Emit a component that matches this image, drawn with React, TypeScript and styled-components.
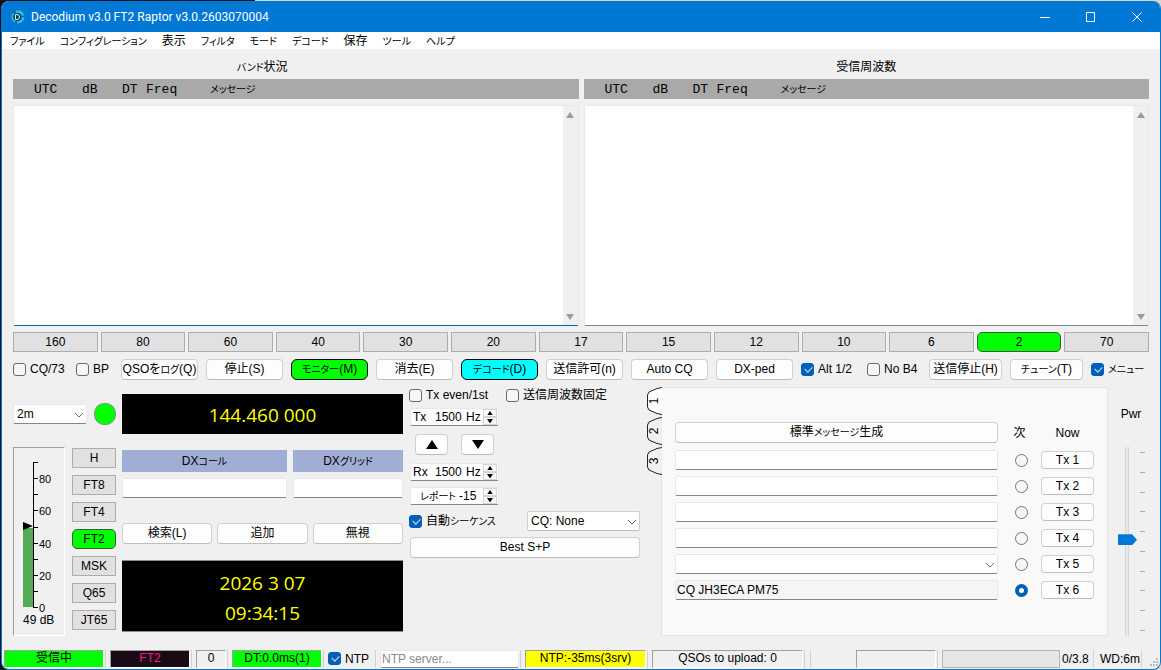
import React from 'react';
import styled, { createGlobalStyle, css } from 'styled-components';

const Global = createGlobalStyle`
  * { box-sizing: border-box; }
  html { background: linear-gradient(to right, #10131c 255px, #d6d6d6 255px); }
  body { margin: 0; }
  body, button, input, select, textarea {
    font-family: "Liberation Sans", "Noto Sans CJK JP", sans-serif;
    font-size: 12px;
    line-height: 16px;
    font-feature-settings: "palt";
    color: #000;
  }
  button, input, select, textarea { margin: 0; padding: 0; outline: none; }
`;

/* ---------- text ---------- */

const Kana = styled.span`
  font-size: 10px;
  line-height: 1;
  font-feature-settings: "palt";
`;

/* Katakana runs are set smaller than the kanji and Latin text beside them. */
function Text({ children }: { children: string }) {
  return (
    <>
      {children.split(/([\u30a0-\u30ff]+)/).map((part, i) =>
        i % 2 ? <Kana key={i}>{part}</Kana> : part,
      )}
    </>
  );
}

/* ---------- window frame ---------- */

const Window = styled.div`
  display: flex;
  flex-direction: column;
  min-height: calc(100vh - 1px);
  margin: 1px 0 0 1px;
  border: 1px solid #0078d4;
  border-top: 0;
  border-radius: 8px;
  overflow: hidden;
  background: #f0f0f0;
`;

const TitleBar = styled.header`
  display: flex;
  align-items: center;
  height: 31px;
  flex: none;
  padding-left: 9px;
  background: #0078d4;
`;

const TitleText = styled.h1`
  flex: 1;
  margin: 0 0 0 6px;
  color: #fff;
  font: 400 12px/16px Roboto, sans-serif;
`;

const CaptionButton = styled.button`
  display: flex;
  align-items: center;
  justify-content: center;
  width: 46px;
  height: 31px;
  border: 0;
  background: none;
`;

const MenuBar = styled.nav`
  display: flex;
  flex: none;
  gap: 15px;
  height: 17px;
  padding-left: 8px;
  background: #fff;
`;

const MenuItem = styled.button`
  border: 0;
  background: none;
  white-space: nowrap;
`;

const Main = styled.main`
  display: flex;
  flex: 1;
  flex-direction: column;
  gap: 6px;
  padding: 0 11px 13px 11px;
`;

/* ---------- decode panes ---------- */

const Panes = styled.div`
  display: flex;
  flex: 1;
  gap: 5px;
`;

const Pane = styled.section`
  display: flex;
  flex: 1;
  flex-direction: column;
  min-width: 0;
`;

const PaneTitle = styled.h2`
  margin: 0;
  padding: 8px 67px 2px 0;
  font-size: 12px;
  line-height: 20px;
  font-weight: 400;
  text-align: center;
`;

const WidePaneTitle = styled(PaneTitle)`
  padding-right: 0;
`;

const PaneHeader = styled.div`
  display: grid;
  grid-template-columns: 48px 40px 24px 64px 1fr;
  height: 20px;
  margin-bottom: 6px;
  padding-left: 21px;
  background: #a9a9a9;
  font: 13px/21px "Liberation Mono", "Noto Sans CJK JP", monospace;
`;

const PaneBody = styled.div<{ $active?: boolean }>`
  display: flex;
  flex: 1;
  min-height: 160px;
  border: 1px solid #e6e8ea;
  border-bottom-color: ${(p) => (p.$active ? '#0067c0' : '#868686')};
  border-radius: 2px;
  background: #fff;
`;

const Decodes = styled.textarea`
  flex: 1;
  min-width: 0;
  border: 0;
  background: #fff;
  resize: none;
  overflow: hidden;
`;

const ScrollBar = styled.div`
  display: flex;
  flex-direction: column;
  align-items: center;
  justify-content: space-between;
  width: 15px;
  padding: 6px 0 5px;
  background: #f0f0f0;
`;

/* ---------- buttons ---------- */

const BandGrid = styled.div`
  display: grid;
  grid-template-columns: repeat(13, 1fr);
  gap: 3px;
`;

const FlatButton = styled.button<{ $on?: boolean }>`
  height: 20px;
  border: 1px solid #adadad;
  background: #e1e1e1;
  line-height: 18px;
  ${(p) =>
    p.$on &&
    css`
      border-color: #3c5a3c;
      border-radius: 5px;
      background: #00ff00;
    `}
`;

const PushButton = styled.button<{ $fill?: string }>`
  flex: 1;
  min-width: 0;
  height: 21px;
  border: 1px solid #d0d0d0;
  border-bottom-color: #bdbdbd;
  border-radius: 4px;
  background: #fdfdfd;
  line-height: 19px;
  white-space: nowrap;
  ${(p) =>
    p.$fill &&
    css`
      border-color: #000;
      border-radius: 6px;
      background: ${p.$fill};
    `}
`;

const SmallPush = styled(PushButton)`
  height: 18px;
  line-height: 16px;
`;

const TuneButton = styled(PushButton)`
  flex: none;
  width: 73px;
`;

const ArrowButton = styled(PushButton)`
  display: flex;
  flex: none;
  align-items: center;
  justify-content: center;
  width: 33px;
`;

const ActionRow = styled.div`
  display: flex;
  align-items: center;
  gap: 8px;
  height: 22px;
`;

/* ---------- tick boxes ---------- */

const CheckLabel = styled.label<{ $width?: number }>`
  display: flex;
  flex: none;
  align-items: center;
  gap: 4px;
  width: ${(p) => (p.$width ? `${p.$width}px` : 'auto')};
  white-space: nowrap;
`;

const Box = styled.input`
  appearance: none;
  position: relative;
  flex: none;
  width: 13px;
  height: 13px;
  border: 1px solid #6a6a6a;
  border-radius: 3px;
  background: #f6f6f6;
  &:checked {
    border-color: #005fb8;
    background: #005fb8;
  }
  &:checked::after {
    content: "";
    position: absolute;
    left: 3px;
    top: 2px;
    width: 6px;
    height: 4px;
    border: solid #cfe0f2;
    border-width: 0 0 1px 1px;
    transform: rotate(-45deg);
  }
`;

function Check({ children, width, on }: { children: string; width?: number; on?: boolean }) {
  return (
    <CheckLabel $width={width}>
      <Box type="checkbox" defaultChecked={on} />
      <span><Text>{children}</Text></span>
    </CheckLabel>
  );
}

/* ---------- fields ---------- */

const fieldLook = css`
  border: 1px solid #e8e8e8;
  border-bottom-color: #868686;
  border-radius: 2px;
  background: #fff;
`;

const Field = styled.input`
  ${fieldLook}
  width: 100%;
  min-width: 0;
  height: 20px;
  padding: 0 1px;
  &:read-only { background: #f5f5f5; }
  &::placeholder { color: #8a8a8a; opacity: 1; }
`;

const Combo = styled.span<{ $width?: number }>`
  position: relative;
  display: flex;
  flex: none;
  width: ${(p) => (p.$width ? `${p.$width}px` : '100%')};
`;

const ComboSelect = styled.select<{ $framed?: boolean }>`
  ${fieldLook}
  appearance: none;
  width: 100%;
  height: 20px;
  padding: 0 18px 0 3px;
  ${(p) => p.$framed && css`border-color: #cfcfcf; border-bottom-color: #bdbdbd;`}
`;

const Chevron = styled.svg`
  position: absolute;
  right: 3px;
  top: calc(50% - 2px);
  pointer-events: none;
`;

function Select({ label, options, width, framed }: { label: string; options: string[]; width?: number; framed?: boolean }) {
  return (
    <Combo $width={width}>
      <ComboSelect aria-label={label} $framed={framed}>
        {options.map((o) => (
          <option key={o}>{o}</option>
        ))}
      </ComboSelect>
      <Chevron width="10" height="6" viewBox="0 0 10 6">
        <path d="M1 1l4 4 4-4" fill="none" stroke="#6b6b6b" />
      </Chevron>
    </Combo>
  );
}

const Spin = styled.label`
  ${fieldLook}
  display: flex;
  align-items: center;
  width: 89px;
  height: 18px;
  margin-left: 1px;
  padding-left: 2px;
`;

const SpinPrefix = styled.span<{ $wide?: boolean }>`
  flex: none;
  width: ${(p) => (p.$wide ? 46 : 22)}px;
  padding-left: ${(p) => (p.$wide ? 7 : 0)}px;
  white-space: nowrap;
`;

const SpinValue = styled.input`
  flex: 1;
  min-width: 0;
  height: 14px;
  border: 0;
  background: none;
`;

const SpinSuffix = styled.span`
  width: 17px;
`;

const SpinButtons = styled.span`
  display: flex;
  flex: none;
  flex-direction: column;
  width: 14px;
  margin-right: 1px;
`;

const SpinButton = styled.button`
  display: flex;
  align-items: center;
  justify-content: center;
  height: 8px;
  border: 1px solid #d4d4d4;
  background: #f8f8f8;
`;

function Triangle({ size, down, color = '#000' }: { size: number; down?: boolean; color?: string }) {
  return (
    <svg width={size} height={size * 0.75} viewBox="0 0 8 6" aria-hidden="true">
      <path d={down ? 'M0 0h8L4 6z' : 'M0 6h8L4 0z'} fill={color} />
    </svg>
  );
}

function Spinner({ prefix, value, suffix, wide }: { prefix: string; value: string; suffix?: string; wide?: boolean }) {
  return (
    <Spin>
      <SpinPrefix $wide={wide}><Text>{prefix}</Text></SpinPrefix>
      <SpinValue defaultValue={value} />
      {suffix && <SpinSuffix>{suffix}</SpinSuffix>}
      <SpinButtons>
        <SpinButton aria-label={`${prefix} +`}><Triangle size={6} /></SpinButton>
        <SpinButton aria-label={`${prefix} -`}><Triangle size={6} down /></SpinButton>
      </SpinButtons>
    </Spin>
  );
}

/* ---------- lower section ---------- */

const Lower = styled.div`
  display: flex;
  height: 250px;
  flex: none;
  padding-top: 1px;
`;

const Station = styled.section`
  display: flex;
  flex: none;
  flex-direction: column;
  gap: 13px;
  width: 390px;
  padding-top: 7px;
`;

const DialRow = styled.div`
  display: flex;
  align-items: center;
`;

const Lamp = styled.button`
  width: 22px;
  height: 22px;
  margin: 0 6px 0 7px;
  border: 1px solid #8f8f8f;
  border-radius: 10px;
  background: #00ff00;
`;

const Display = styled.div`
  flex: 1;
  height: 40px;
  background: #000;
  color: #ffff00;
  font: 19px/43px "Open Sans", sans-serif;
  text-align: center;
`;

const Clock = styled(Display)`
  flex: none;
  height: 72px;
  padding-top: 7px;
  border: 1px solid #8a8a8a;
  border-width: 1px 0;
  line-height: 30px;
`;

const StationRow = styled.div`
  display: flex;
  height: 189px;
`;

const Meter = styled.div`
  width: 52px;
  border: 1px solid #a0a0a0;
  border-right-color: #fff;
  border-bottom-color: #fff;
`;

const Modes = styled.div`
  display: flex;
  flex-direction: column;
  gap: 7px;
  width: 44px;
  margin: 1px 6px 0 7px;
`;

const Contact = styled.div`
  flex: 1;
  padding-top: 3px;
`;

const DxGrid = styled.div`
  display: grid;
  grid-template-columns: 3fr 2fr;
  gap: 6px;
  margin-bottom: 25px;
`;

const DxLabel = styled.label`
  height: 22px;
  background: #a0aed6;
  line-height: 22px;
  text-align: center;
`;

const ButtonRow = styled.div`
  display: flex;
  gap: 5px;
  margin-bottom: 16px;
`;

const Tuning = styled.section`
  display: flex;
  flex: none;
  flex-direction: column;
  gap: 6px;
  width: 232px;
  margin: 0 5px 0 6px;
  padding: 1px 1px 0 0;
`;

const TuningRow = styled.div`
  display: flex;
  align-items: center;
  justify-content: space-between;
  height: 20px;
`;

const SlotRow = styled(TuningRow)`
  justify-content: flex-start;
  gap: 18px;
  height: 14px;
`;

const ArrowRow = styled(TuningRow)`
  justify-content: flex-start;
  gap: 13px;
  height: 25px;
  padding-left: 6px;
`;

const BestRow = styled.div`
  display: flex;
  margin-left: 1px;
`;

/* ---------- message tabs ---------- */

const Messages = styled.section`
  display: flex;
  flex: 1;
  min-width: 0;
`;

const Tabs = styled.div`
  display: flex;
  flex-direction: column;
  gap: 2px;
  width: 15px;
`;

const Tab = styled.button`
  position: relative;
  width: 16px;
  height: 28px;
  border: 0;
  background: none;
`;

const TabShape = styled.svg`
  position: absolute;
  inset: 0;
`;

const TabText = styled.span`
  position: relative;
  display: block;
  transform: rotate(-90deg);
`;

const TabPage = styled.div`
  flex: 1;
  min-width: 0;
  padding: 34px 13px 0;
  border: 1px solid #e3e3e3;
  background: #f9f9f9;
`;

const MessageRow = styled.div`
  display: grid;
  grid-template-columns: 1fr 43px 53px;
  align-items: center;
  justify-items: center;
  height: 26px;
`;

const GenerateRow = styled(MessageRow)`
  height: 21px;
  margin-bottom: 4px;
`;

const WideButton = styled(PushButton)`
  width: 100%;
`;

const TxButton = styled(SmallPush)`
  width: 100%;
`;

const Radio = styled.input`
  appearance: none;
  width: 13px;
  height: 13px;
  margin-left: 3px;
  border: 1px solid #767676;
  border-radius: 50%;
  background: #f6f6f6;
  &:checked {
    border: 4px solid #005fb8;
    background: #fff;
  }
`;

const Power = styled.section`
  display: flex;
  flex-direction: column;
  gap: 25px;
  align-items: flex-end;
  width: 41px;
  padding: 19px 4px 0 0;
`;

const PowerLabel = styled.label`
  width: 28px;
  text-align: center;
`;

const PowerBody = styled.div`
  display: flex;
  gap: 3px;
`;

const PowerSlider = styled.input`
  appearance: none;
  writing-mode: vertical-lr;
  direction: rtl;
  width: 19px;
  height: 189px;
  background: linear-gradient(to right, transparent 7px, #d2d6d8 7px, #d2d6d8 8px, #e7eaea 8px, #e7eaea 10px, #d2d6d8 10px, #d2d6d8 11px, transparent 11px);
  &::-webkit-slider-thumb {
    appearance: none;
    width: 19px;
    height: 11px;
    background: #0078d7;
    clip-path: polygon(0 0, 14px 0, 100% 50%, 14px 100%, 0 100%);
  }
`;

const PowerTicks = styled.div`
  display: flex;
  flex-direction: column;
  justify-content: space-between;
  height: 179px;
  margin-top: 5px;
`;

const PowerTick = styled.i`
  width: 5px;
  height: 1px;
  background: #b0a999;
`;

/* ---------- status bar ---------- */

const StatusBar = styled.footer`
  display: flex;
  flex: none;
  align-items: center;
  height: 20px;
  padding: 0 0 1px 2px;
`;

const Cell = styled.div<{ $w: number; $bg?: string; $fg?: string }>`
  flex: none;
  width: ${(p) => p.$w}px;
  height: 18px;
  border: 1px solid #a0a0a0;
  border-right-color: #fff;
  border-bottom-color: #fff;
  background: ${(p) => p.$bg || 'transparent'};
  color: ${(p) => p.$fg || '#000'};
  line-height: 14px;
  text-align: center;
  white-space: nowrap;
`;

const Divider = styled.i`
  flex: none;
  width: 1px;
  height: 18px;
  margin: 0 4px 0 1px;
  background: #d2d2d2;
`;

const NtpCheck = styled.div`
  width: 46px;
`;

const NtpField = styled(Field)`
  flex: none;
  width: 139px;
  height: 18px;
`;

const Stretch = styled.div`
  flex: 1;
`;

const Progress = styled.div`
  width: 118px;
  height: 18px;
  border: 1px solid #b4b4b4;
  background: #e6e6e6;
`;

const StatusText = styled.span<{ $w: number }>`
  width: ${(p) => p.$w}px;
  margin-left: 2px;
  white-space: nowrap;
`;

const Grip = styled.svg`
  align-self: flex-end;
  margin-left: 4px;
`;

const menus = ['ファイル', 'コンフィグレーション', '表示', 'フィルタ', 'モード', 'デコード', '保存', 'ツール', 'ヘルプ'];
const bands = ['160', '80', '60', '40', '30', '20', '17', '15', '12', '10', '6', '2', '70'];
const modes = ['H', 'FT8', 'FT4', 'FT2', 'MSK', 'Q65', 'JT65'];
const actions: [string, string?][] = [
  ['QSOをログ(Q)'],
  ['停止(S)'],
  ['モニター(M)', '#00ff00'],
  ['消去(E)'],
  ['デコード(D)', '#00ffff'],
  ['送信許可(n)'],
  ['Auto CQ'],
  ['DX-ped'],
];

function Headings() {
  return (
    <PaneHeader>
      <span>UTC</span>
      <span>dB</span>
      <span>DT</span>
      <span>Freq</span>
      <span><Text>メッセージ</Text></span>
    </PaneHeader>
  );
}

function DecodeArea({ label, active }: { label: string; active?: boolean }) {
  return (
    <PaneBody $active={active}>
      <Decodes aria-label={label} readOnly />
      <ScrollBar>
        <Triangle size={8} color="#9b9b9b" />
        <Triangle size={8} color="#9b9b9b" down />
      </ScrollBar>
    </PaneBody>
  );
}

function LevelMeter() {
  const ticks = Array.from({ length: 10 }, (_, i) => i);
  return (
    <Meter>
      <svg width="50" height="187" viewBox="0 0 50 187">
        <rect x="9" y="80" width="10" height="79" fill="#55aa55" />
        <path d="M9 74l10 4-10 4z" />
        <path d="M19.500 14v146" stroke="#000" />
        {ticks.map((i) => (
          <path key={i} d={`M20 ${Math.round(159 - i * 16.1) + 0.5}h4`} stroke="#000" />
        ))}
        {[0, 20, 40, 60, 80].map((v) => (
          <text key={v} x="25" y={164 - v * 1.61} fontSize="11">{v}</text>
        ))}
        <text x="9" y="176" fontSize="12">49 dB</text>
      </svg>
    </Meter>
  );
}

export default function App() {
  return (
    <>
      <Global />
      <Window>
        <TitleBar>
          <svg width="14" height="14" viewBox="0 0 14 14" aria-hidden="true">
            <circle cx="7" cy="7" r="6.500" fill="#0a6a94" />
            <circle cx="7" cy="7" r="5.300" fill="none" stroke="#1fc4e8" strokeWidth="2.400" strokeDasharray="9 2" />
            <circle cx="6" cy="7" r="3.800" fill="#123a5c" />
            <path d="M4.500 4.500h1.500a2.500 2.500 0 0 1 0 5h-1.500z" fill="none" stroke="#d6f3ff" />
          </svg>
          <TitleText>Decodium v3.0 FT2 Raptor v3.0.2603070004</TitleText>
          <CaptionButton aria-label="最小化">
            <svg width="10" height="10"><path d="M0 5.500h10" stroke="#fff" /></svg>
          </CaptionButton>
          <CaptionButton aria-label="最大化">
            <svg width="10" height="10"><path d="M.5.5h8v9h-8z" fill="none" stroke="#fff" /></svg>
          </CaptionButton>
          <CaptionButton aria-label="閉じる">
            <svg width="10" height="10"><path d="M.5.5l9 9M9.500.5l-9 9" stroke="#fff" /></svg>
          </CaptionButton>
        </TitleBar>
        <MenuBar>
          {menus.map((m) => (
            <MenuItem key={m}><Text>{m}</Text></MenuItem>
          ))}
        </MenuBar>

        <Main>
          <Panes>
            <Pane>
              <PaneTitle><Text>バンド状況</Text></PaneTitle>
              <Headings />
              <DecodeArea label="バンド状況" active />
            </Pane>
            <Pane>
              <WidePaneTitle>受信周波数</WidePaneTitle>
              <Headings />
              <DecodeArea label="受信周波数" />
            </Pane>
          </Panes>

          <BandGrid>
            {bands.map((b) => (
              <FlatButton key={b} $on={b === '2'}>{b}</FlatButton>
            ))}
          </BandGrid>

          <ActionRow>
            <Check width={55}>CQ/73</Check>
            <Check width={37}>BP</Check>
            {actions.map(([text, fill]) => (
              <PushButton key={text} $fill={fill}><Text>{text}</Text></PushButton>
            ))}
            <Check width={58} on>Alt 1/2</Check>
            <Check width={54}>No B4</Check>
            <TuneButton>送信停止(H)</TuneButton>
            <TuneButton><Text>チューン(T)</Text></TuneButton>
            <Check width={58} on>メニュー</Check>
          </ActionRow>

          <Lower>
            <Station>
              <DialRow>
                <Select label="バンド" options={['2m']} width={74} />
                <Lamp aria-label="CAT" />
                <Display>144.460 000</Display>
              </DialRow>
              <StationRow>
                <LevelMeter />
                <Modes>
                  {modes.map((m) => (
                    <FlatButton key={m} $on={m === 'FT2'}>{m}</FlatButton>
                  ))}
                </Modes>
                <Contact>
                  <DxGrid>
                    <DxLabel htmlFor="dx-call"><Text>DXコール</Text></DxLabel>
                    <DxLabel htmlFor="dx-grid"><Text>DXグリッド</Text></DxLabel>
                    <Field id="dx-call" />
                    <Field id="dx-grid" />
                  </DxGrid>
                  <ButtonRow>
                    <PushButton>検索(L)</PushButton>
                    <PushButton>追加</PushButton>
                    <PushButton>無視</PushButton>
                  </ButtonRow>
                  <Clock>
                    <div>2026 3 07</div>
                    <div>09:34:15</div>
                  </Clock>
                </Contact>
              </StationRow>
            </Station>

            <Tuning>
              <SlotRow>
                <Check>Tx even/1st</Check>
                <Check>送信周波数固定</Check>
              </SlotRow>
              <Spinner prefix="Tx" value="1500" suffix="Hz" />
              <ArrowRow>
                <ArrowButton aria-label="Tx ← Rx"><Triangle size={12} /></ArrowButton>
                <ArrowButton aria-label="Rx ← Tx"><Triangle size={12} down /></ArrowButton>
              </ArrowRow>
              <Spinner prefix="Rx" value="1500" suffix="Hz" />
              <Spinner prefix="レポート" value="-15" wide />
              <TuningRow>
                <Check on>自動シーケンス</Check>
                <Select label="CQ" options={['CQ: None']} width={113} framed />
              </TuningRow>
              <BestRow>
                <PushButton>Best S+P</PushButton>
              </BestRow>
            </Tuning>

            <Messages>
              <Tabs role="tablist">
                {['1', '2', '3'].map((t, i) => (
                  <Tab key={t} role="tab" aria-selected={i === 0}>
                    <TabShape width="16" height="28" viewBox="0 0 16 28">
                      <path
                        d="M16 .5L11 1.500 3 5 1.500 8v12L3 23l8 3.500 5 1"
                        fill={i === 0 ? '#fdfdfd' : '#f0f0f0'}
                        stroke="#222"
                      />
                    </TabShape>
                    <TabText>{t}</TabText>
                  </Tab>
                ))}
              </Tabs>
              <TabPage role="tabpanel">
                <GenerateRow>
                  <WideButton><Text>標準メッセージ生成</Text></WideButton>
                  <span>次</span>
                  <span>Now</span>
                </GenerateRow>
                {[1, 2, 3, 4, 5, 6].map((n) => (
                  <MessageRow key={n}>
                    {n === 5 ? (
                      <Select label="Tx 5" options={['']} />
                    ) : (
                      <Field aria-label={`Tx ${n}`} readOnly={n === 6} defaultValue={n === 6 ? 'CQ JH3ECA PM75' : ''} />
                    )}
                    <Radio type="radio" name="next" aria-label={`次 Tx ${n}`} defaultChecked={n === 6} />
                    <TxButton>Tx {n}</TxButton>
                  </MessageRow>
                ))}
              </TabPage>
            </Messages>

            <Power>
              <PowerLabel htmlFor="power">Pwr</PowerLabel>
              <PowerBody>
                <PowerSlider id="power" type="range" min={0} max={100} defaultValue={51} />
                <PowerTicks>
                  {Array.from({ length: 10 }, (_, i) => (
                    <PowerTick key={i} />
                  ))}
                </PowerTicks>
              </PowerBody>
            </Power>
          </Lower>
        </Main>

        <StatusBar>
          <Cell $w={100} $bg="#00ff00">受信中</Cell>
          <Divider />
          <Cell $w={80} $bg="#1a0a14" $fg="#ff1493">FT2</Cell>
          <Divider />
          <Cell $w={30}>0</Cell>
          <Divider />
          <Cell $w={90} $bg="#00ff00">DT:0.0ms(1)</Cell>
          <Divider />
          <NtpCheck><Check on>NTP</Check></NtpCheck>
          <Divider />
          <NtpField aria-label="NTP server" placeholder="NTP server..." />
          <Divider />
          <Cell $w={121} $bg="#ffff00">NTP:-35ms(3srv)</Cell>
          <Divider />
          <Cell $w={151}>QSOs to upload: 0</Cell>
          <Divider />
          <Divider />
          <Stretch />
          <Cell $w={80} />
          <Divider />
          <Progress />
          <StatusText $w={30}>0/3.8</StatusText>
          <Divider />
          <StatusText $w={40}>WD:6m</StatusText>
          <Divider />
          <Grip width="10" height="10" viewBox="0 0 10 10">
            <path d="M6 0h2v2h-2zM3 3h2v2h-2zM6 3h2v2h-2zM0 6h2v2h-2zM3 6h2v2h-2zM6 6h2v2h-2z" fill="#bdbdbd" />
          </Grip>
        </StatusBar>
      </Window>
    </>
  );
}
